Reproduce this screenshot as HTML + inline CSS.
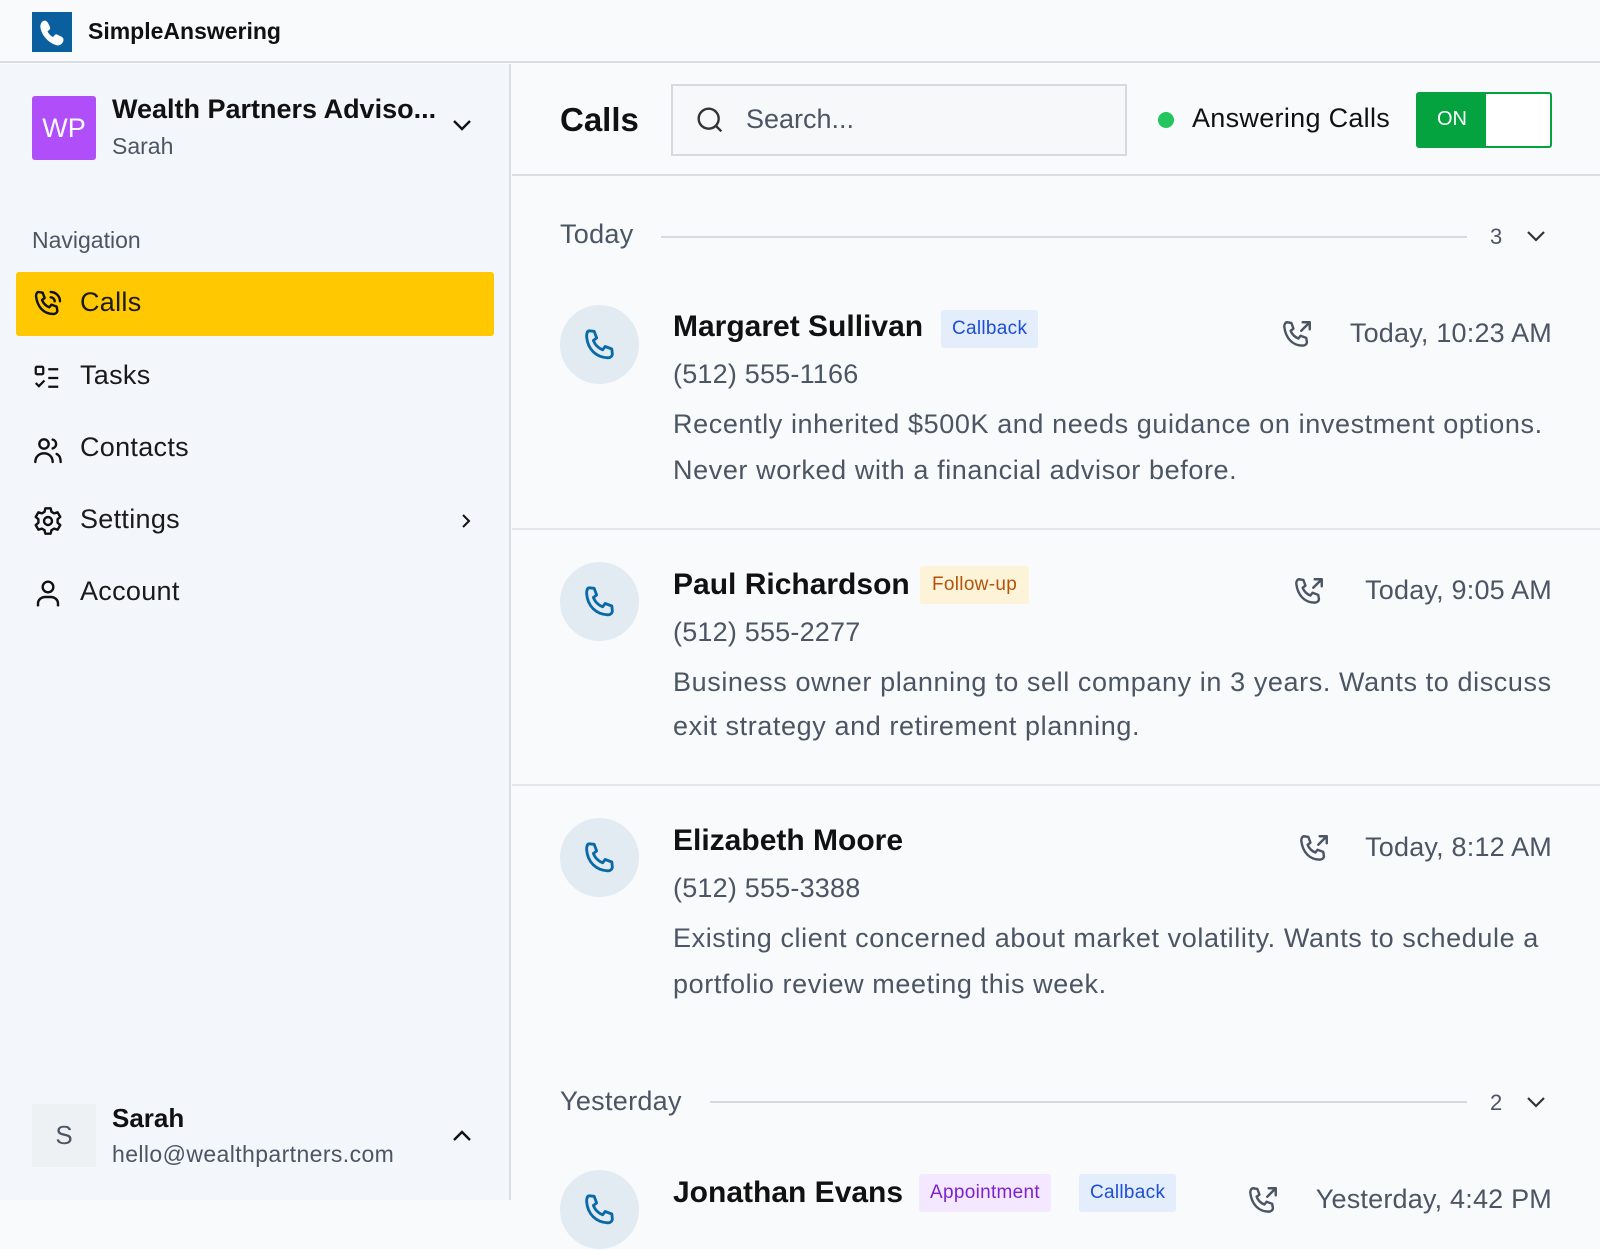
<!DOCTYPE html>
<html><head><meta charset="utf-8"><style>
*{margin:0;padding:0;box-sizing:border-box}
body{width:1600px;height:1200px;overflow:hidden;background:#f8fafc;font-family:"Liberation Sans",sans-serif;color:#111;position:relative}
.a{position:absolute;white-space:nowrap}
svg{display:block}
.nav{font-size:27px;color:#1a1a1a;letter-spacing:0.3px}
.name{font-size:30px;font-weight:bold;color:#111}
.ph{font-size:27px;color:#4b5563;letter-spacing:0.2px}
.desc{font-size:27px;color:#4b5563;letter-spacing:0.6px}
.time{font-size:27px;color:#4b5563;letter-spacing:0.2px}
.tag{font-size:19px;padding:0 11px;height:38px;line-height:38px;border-radius:3px;letter-spacing:0.3px}
.circ{width:79px;height:79px;border-radius:50%;background:#e2ebf2}
</style></head><body>
<!-- top header -->
<div class="a" style="left:0;top:0;width:1600px;height:63px;background:#f9fafb;border-bottom:2px solid #d9dee3"></div>
<div class="a" style="left:32px;top:12px;width:40px;height:40px;background:#0a5f9e">
<svg width="40" height="40" viewBox="0 0 40 40"><path d="M11 9c2-1 4 0 5 2l2 4c.5 1.5 0 2.5-1.5 3.5l-1 .8c1 2.5 3 4.5 5.5 5.8l.8-1c1-1.5 2-2 3.5-1.5l4 2c2 1 2.8 3 1.8 5-1.5 3-4 4.5-7 3.5C17 31 10 24 8.5 16 8 13 9 10.5 11 9z" fill="#fff"/></svg></div>
<div class="a" style="left:88px;top:18px;font-size:23px;font-weight:bold;color:#111">SimpleAnswering</div>

<!-- sidebar -->
<div class="a" style="left:0;top:64px;width:511px;height:1136px;background:#f3f7fb;border-right:2px solid #d9dee3"></div>
<div class="a" style="left:32px;top:96px;width:64px;height:64px;background:#b04ef9;border-radius:3px;color:#fff;font-size:27px;line-height:64px;text-align:center">WP</div>
<div class="a" style="left:112px;top:94px;font-size:27px;font-weight:bold;color:#111">Wealth Partners Adviso...</div>
<div class="a" style="left:112px;top:133px;font-size:23px;color:#4b5563">Sarah</div>
<svg class="a" style="left:450px;top:117px" width="24" height="16" viewBox="0 0 24 16"><path d="M4 4l8 8 8-8" fill="none" stroke="#111" stroke-width="2.4"/></svg>
<div class="a" style="left:32px;top:227px;font-size:23px;color:#4b5563">Navigation</div>
<div class="a" style="left:16px;top:272px;width:478px;height:64px;background:#ffc800;border-radius:3px"></div>
<svg class="a" style="left:32px;top:288px" width="32" height="32" viewBox="0 0 24 24" fill="none" stroke="#111" stroke-width="1.8" stroke-linecap="round" stroke-linejoin="round"><path d="M5 3l3 .5 1.5 4-2 1.5c1 2.5 3 4.5 5.5 5.5l1.5-2 4 1.5.5 3c0 1.5-1.5 2.5-3 2.5C9 19.5 4 14.5 3 6 3 4.5 3.8 3 5 3z"/><path d="M14 3a7 7 0 0 1 7 7M14 7a3 3 0 0 1 3 3"/></svg>
<div class="a nav" style="left:80px;top:287px">Calls</div>
<svg class="a" style="left:32px;top:363px" width="30" height="30" viewBox="0 0 24 24" fill="none" stroke="#111" stroke-width="1.8"><rect x="3" y="3" width="6" height="6" rx="1"/><path d="M3 16l2.5 2.5L10 14M13 5h8M13 12h8M13 19h8"/></svg>
<div class="a nav" style="left:80px;top:360px">Tasks</div>
<svg class="a" style="left:32px;top:434px" width="32" height="32" viewBox="0 0 24 24" fill="none" stroke="#111" stroke-width="1.8" stroke-linecap="round"><circle cx="9" cy="7.5" r="3.5"/><path d="M2.5 21c0-4 3-6.5 6.5-6.5s6.5 2.5 6.5 6.5M15.5 4.2a3.4 3.4 0 0 1 0 6.6M18.5 15c2 .8 3 3 3 6"/></svg>
<div class="a nav" style="left:80px;top:432px">Contacts</div>
<svg class="a" style="left:32px;top:505px" width="32" height="32" viewBox="0 0 24 24" fill="none" stroke="#111" stroke-width="1.8" stroke-linejoin="round"><path d="M10 2.5h4l.6 2.6 2 1.2 2.6-.8 2 3.4-2 1.8v2.6l2 1.8-2 3.4-2.6-.8-2 1.2-.6 2.6h-4l-.6-2.6-2-1.2-2.6.8-2-3.4 2-1.8v-2.6l-2-1.8 2-3.4 2.6.8 2-1.2z"/><circle cx="12" cy="12" r="3"/></svg>
<div class="a nav" style="left:80px;top:504px">Settings</div>
<svg class="a" style="left:458px;top:512px" width="16" height="18" viewBox="0 0 16 18"><path d="M5 3l6 6-6 6" fill="none" stroke="#111" stroke-width="2"/></svg>
<svg class="a" style="left:32px;top:577px" width="32" height="32" viewBox="0 0 24 24" fill="none" stroke="#111" stroke-width="1.8"><circle cx="12" cy="7.5" r="4"/><path d="M4.5 22v-2c0-3 2.5-5 5.5-5h4c3 0 5.5 2 5.5 5v2"/></svg>
<div class="a nav" style="left:80px;top:576px">Account</div>
<div class="a" style="left:32px;top:1104px;width:64px;height:63px;background:#eef1f4;color:#4b5563;font-size:26px;line-height:63px;text-align:center">S</div>
<div class="a" style="left:112px;top:1103px;font-size:26px;font-weight:bold;color:#111">Sarah</div>
<div class="a" style="left:112px;top:1141px;font-size:23px;color:#4b5563;letter-spacing:0.4px">hello@wealthpartners.com</div>
<svg class="a" style="left:450px;top:1128px" width="24" height="16" viewBox="0 0 24 16"><path d="M4 12l8-8 8 8" fill="none" stroke="#111" stroke-width="2.4"/></svg>

<!-- main header -->
<div class="a" style="left:512px;top:174px;width:1088px;height:2px;background:#d9dee3"></div>
<div class="a" style="left:560px;top:101px;font-size:33px;font-weight:bold;color:#111">Calls</div>
<div class="a" style="left:671px;top:84px;width:456px;height:72px;border:2px solid #d5dadf;background:#f6f8fa"></div>
<svg class="a" style="left:694px;top:104px" width="32" height="32" viewBox="0 0 24 24" fill="none" stroke="#333" stroke-width="1.8"><circle cx="11" cy="11" r="7.5"/><path d="M16.5 16.5l4 4"/></svg>
<div class="a" style="left:746px;top:104px;font-size:27px;color:#4b5563">Search...</div>
<div class="a" style="left:1158px;top:112px;width:16px;height:16px;border-radius:50%;background:#22c55e"></div>
<div class="a" style="left:1192px;top:103px;font-size:27px;color:#111;letter-spacing:0.3px">Answering Calls</div>
<div class="a" style="left:1416px;top:92px;width:136px;height:56px;border:2px solid #05a33f;border-radius:3px;background:#fff;overflow:hidden"><div style="width:68px;height:100%;background:#05a33f;color:#fff;font-size:20px;line-height:50px;text-align:center">ON</div></div>

<!-- Today -->
<div class="a" style="left:560px;top:219px;font-size:27px;color:#4b5563;letter-spacing:0.3px">Today</div>
<div class="a" style="left:661px;top:236px;width:806px;height:2px;background:#d5dadf"></div>
<div class="a" style="left:1490px;top:224px;font-size:22px;color:#4b5563">3</div>
<svg class="a" style="left:1524px;top:228px" width="24" height="16" viewBox="0 0 24 16"><path d="M4 4l8 8 8-8" fill="none" stroke="#333" stroke-width="2.2"/></svg>

<svg width="0" height="0" style="position:absolute"><defs>
<symbol id="ph" viewBox="0 0 24 24"><path d="M5.5 3.5l3 .3 1.5 4-2 1.5c1 2.5 3 4.6 5.6 5.6l1.5-2 4 1.5.3 3c0 1.3-1.3 2.4-2.8 2.3C9.5 19.3 4.7 14.5 4 7.3 3.9 5 4.5 3.6 5.5 3.5z" fill="none" stroke="#0a6aa8" stroke-width="1.7" stroke-linejoin="round"/></symbol>
<symbol id="out" viewBox="0 0 24 24"><path d="M5 3l3 .5 1.5 4-2 1.5c1 2.5 3 4.5 5.5 5.5l1.5-2 4 1.5.5 3c0 1.5-1.5 2.5-3 2.5C9 19.5 4 14.5 3 6 3 4.5 3.8 3 5 3z M15 9l6-6M16 3h5v5" fill="none" stroke="#4b5563" stroke-width="1.7" stroke-linecap="round" stroke-linejoin="round"/></symbol>
</defs></svg>

<!-- card 1 -->
<div class="a circ" style="left:560px;top:305px"></div>
<svg class="a" style="left:580px;top:325px" width="40" height="40"><use href="#ph"/></svg>
<div class="a name" style="left:673px;top:310px">Margaret Sullivan</div>
<div class="a tag" style="left:941px;top:310px;background:#e3edfb;color:#1d4ed8">Callback</div>
<svg class="a" style="left:1280px;top:318px" width="34" height="34"><use href="#out"/></svg>
<div class="a time" style="left:1300px;top:318px;width:252px;text-align:right">Today, 10:23 AM</div>
<div class="a ph" style="left:673px;top:359px">(512) 555-1166</div>
<div class="a desc" style="left:673px;top:409px">Recently inherited $500K and needs guidance on investment options.</div>
<div class="a desc" style="left:673px;top:455px">Never worked with a financial advisor before.</div>
<div class="a" style="left:512px;top:528px;width:1088px;height:2px;background:#e3e7eb"></div>

<!-- card 2 -->
<div class="a circ" style="left:560px;top:562px"></div>
<svg class="a" style="left:580px;top:582px" width="40" height="40"><use href="#ph"/></svg>
<div class="a name" style="left:673px;top:568px">Paul Richardson</div>
<div class="a tag" style="left:920px;top:566px;background:#fdf3d8;color:#b45309;padding:0 12px">Follow-up</div>
<svg class="a" style="left:1292px;top:575px" width="34" height="34"><use href="#out"/></svg>
<div class="a time" style="left:1300px;top:575px;width:252px;text-align:right">Today, 9:05 AM</div>
<div class="a ph" style="left:673px;top:617px">(512) 555-2277</div>
<div class="a desc" style="left:673px;top:667px">Business owner planning to sell company in 3 years. Wants to discuss</div>
<div class="a desc" style="left:673px;top:711px">exit strategy and retirement planning.</div>
<div class="a" style="left:512px;top:784px;width:1088px;height:2px;background:#e3e7eb"></div>

<!-- card 3 -->
<div class="a circ" style="left:560px;top:818px"></div>
<svg class="a" style="left:580px;top:838px" width="40" height="40"><use href="#ph"/></svg>
<div class="a name" style="left:673px;top:824px">Elizabeth Moore</div>
<svg class="a" style="left:1297px;top:832px" width="34" height="34"><use href="#out"/></svg>
<div class="a time" style="left:1300px;top:832px;width:252px;text-align:right">Today, 8:12 AM</div>
<div class="a ph" style="left:673px;top:873px">(512) 555-3388</div>
<div class="a desc" style="left:673px;top:923px">Existing client concerned about market volatility. Wants to schedule a</div>
<div class="a desc" style="left:673px;top:969px">portfolio review meeting this week.</div>

<!-- Yesterday -->
<div class="a" style="left:560px;top:1086px;font-size:27px;color:#4b5563;letter-spacing:0.3px">Yesterday</div>
<div class="a" style="left:710px;top:1101px;width:757px;height:2px;background:#d5dadf"></div>
<div class="a" style="left:1490px;top:1090px;font-size:22px;color:#4b5563">2</div>
<svg class="a" style="left:1524px;top:1094px" width="24" height="16" viewBox="0 0 24 16"><path d="M4 4l8 8 8-8" fill="none" stroke="#333" stroke-width="2.2"/></svg>

<!-- card 4 -->
<div class="a circ" style="left:560px;top:1170px"></div>
<svg class="a" style="left:580px;top:1190px" width="40" height="40"><use href="#ph"/></svg>
<div class="a name" style="left:673px;top:1176px">Jonathan Evans</div>
<div class="a tag" style="left:919px;top:1174px;background:#f3e8ff;color:#7e22ce">Appointment</div>
<div class="a tag" style="left:1079px;top:1174px;background:#e3edfb;color:#1d4ed8">Callback</div>
<svg class="a" style="left:1246px;top:1184px" width="34" height="34"><use href="#out"/></svg>
<div class="a time" style="left:1290px;top:1184px;width:262px;text-align:right">Yesterday, 4:42 PM</div>
</body></html>
